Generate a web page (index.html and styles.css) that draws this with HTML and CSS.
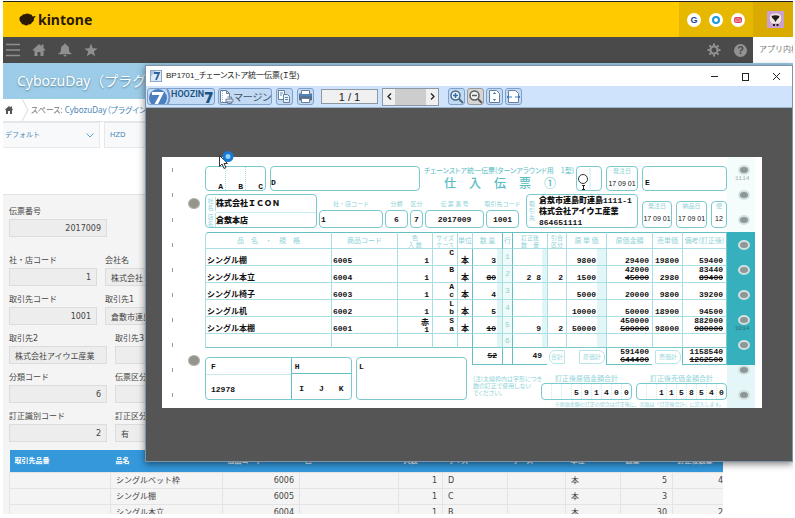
FILE: index.html
```html
<!DOCTYPE html>
<html lang="ja">
<head>
    <meta charset="UTF-8">
    <title>kintone - CybozuDay</title>
    <link rel="stylesheet" href="styles.css">
</head>
<body>
<div class="page">
    <header class="topbar">
        <a href="#" class="brand">
            <svg width="17" height="13" viewBox="0 0 17 12"><path fill="#2b1a05" d="M0.500 6Q0 3 2.500 2.500Q3.500 0.200 6 0.800Q8 -0.800 10.500 0.800Q13 0.500 13.500 3L16.800 2.500L14.800 5.200Q15.500 8 13 9Q12 11.500 9.500 11Q7 12.800 5 11Q2.500 11.500 2.200 9Q0.500 8 0.500 6Z"/></svg>
            <span>kintone</span>
        </a>
        <div class="services">
            <a href="#" class="service garoon">G</a>
            <a href="#" class="service" aria-label="Office"><svg width="14" height="14"><circle cx="7" cy="7" r="3" fill="none" stroke="#1c9ad6" stroke-width="2"/></svg></a>
            <a href="#" class="service" aria-label="Mail"><svg width="14" height="14"><rect x="3.500" y="4.500" width="7" height="5" rx="1" fill="#f08a98" stroke="#d9455c"/><path d="M4 5l3 2.500 3-2.500" fill="none" stroke="#d9455c"/></svg></a>
        </div>
        <div class="account">
            <svg width="17" height="17" viewBox="0 0 17 17"><rect width="17" height="17" fill="#c9a0cf"/><path fill="#efe6dc" d="M3 5Q4 2 8.500 2.500Q13 2 14 5Q15 10 12 12.500H5Q2 10 3 5Z"/><path fill="#221a1a" d="M4.500 5Q8.500 3.500 12.500 5Q12 8 10 8.500L8.500 11L7 8.500Q5 8 4.500 5ZM6 13h2v2H6zM9.500 13h2v2h-2z"/></svg>
        </div>
    </header>

    <nav class="navbar">
        <div class="nav-icons">
            <a href="#" aria-label="メニュー"><svg width="14" height="14"><path d="M0 1.500h14M0 7h14M0 12.500h14" stroke="#8f8f8f" stroke-width="1.500"/></svg></a>
            <a href="#" aria-label="ホーム"><svg width="14" height="14"><path fill="#8f8f8f" d="M7 1 0.500 7l1 1L2.500 7v6h3V9h3v4h3V7l1 1 1-1L11.500 5V1.500H9.500v1.700z"/></svg></a>
            <a href="#" aria-label="通知"><svg width="14" height="14"><path fill="#8f8f8f" d="M7 0.500q1 0 1 1.200 3 1 3 4.300 0 3.500 2.500 4.500v0.800h-13v-0.800Q3 9.500 3 6q0-3.300 3-4.300Q6 0.500 7 0.500zM5.500 12h3q-0.500 1.500-1.500 1.500T5.500 12z"/></svg></a>
            <a href="#" aria-label="お気に入り"><svg width="14" height="14"><path fill="#8f8f8f" d="M7 0.500 8.700 5.200 13.700 5.400 9.800 8.500 11.200 13.300 7 10.500 2.800 13.300 4.200 8.500 0.300 5.400 5.300 5.200z"/></svg></a>
        </div>
        <div class="nav-tools">
            <a href="#" aria-label="設定"><svg width="14" height="14"><circle cx="7" cy="7" r="3.600" fill="none" stroke="#929292" stroke-width="2.200"/><path d="M7 0.500v2M7 11.500v2M0.500 7h2M11.500 7h2M2.400 2.400l1.500 1.500M10.100 10.100l1.500 1.500M2.400 11.600l1.500-1.500M10.100 3.900l1.500-1.500" stroke="#929292" stroke-width="2"/></svg></a>
            <a href="#" aria-label="ヘルプ" class="help">?</a>
        </div>
        <input class="search" type="text" aria-label="アプリ内検索" placeholder="アプリ内検索">
    </nav>

    <h1 class="banner">CybozuDay（プラグイン）</h1>

    <div class="breadcrumb">
        <a href="#" class="crumb-home" aria-label="ホーム"><svg width="8" height="8"><path fill="#555" d="M4 0 0 3.500l0.700 0.800L1 4v4h2V5h2v3h2V4l0.300 0.300L8 3.500 7 2.500V0.500H5.500v0.900z"/></svg></a>
        <svg width="7" height="22"><path d="M0 0 6 11 0 22" fill="none" stroke="#d8dcdf"/></svg>
        <span class="crumb">スペース: <a href="#">CybozuDay（プラグイン）</a></span>
    </div>

    <div class="views">
        <div class="view-box">
            <select class="view" aria-label="一覧"><option>デフォルト</option></select>
            <svg width="8" height="5"><path d="M0.500 0.500 4 4 7.500 0.500" fill="none" stroke="#5fa3d0"/></svg>
        </div>
        <a href="#" class="view-box view-link">HZD</a>
    </div>

    <main class="record">
        <div class="fields first">
            <label class="field w98">伝票番号<input class="num" value="2017009" readonly></label>
        </div>
        <div class="fields">
            <label class="field w88">社・店コード<input class="num" value="1" readonly></label>
            <label class="field w98">会社名<input value="株式会社ＩＣＯＮ" readonly></label>
        </div>
        <div class="fields">
            <label class="field w88">取引先コード<input class="num" value="1001" readonly></label>
            <label class="field w98">取引先1<input value="倉敷市連島町連島1111-1" readonly></label>
        </div>
        <div class="fields">
            <label class="field w98">取引先2<input value="株式会社アイウエ産業" readonly></label>
            <label class="field w98">取引先3<input value="" readonly></label>
        </div>
        <div class="fields">
            <label class="field w98">分類コード<input class="num" value="6" readonly></label>
            <label class="field w98">伝票区分<input value="" readonly></label>
        </div>
        <div class="fields">
            <label class="field w98">訂正識別コード<input class="num" value="2" readonly></label>
            <label class="field w98">訂正区分<input value="有" readonly></label>
        </div>

        <table class="items">
            <colgroup><col class="i1"><col class="i2"><col class="i3"><col class="i4"><col class="i5"><col class="i6"><col class="i7"><col class="i8"><col class="i9"><col class="i10"></colgroup>
            <thead>
                <tr><th>取引先品番</th><th>品名</th><th>商品コード</th><th>色</th><th>入数</th><th>サイズ</th><th>ケース</th><th>単位</th><th>数量</th><th>訂正後数量</th></tr>
            </thead>
            <tbody>
                <tr><td></td><td>シングルベット枠</td><td class="num">6006</td><td></td><td class="num">1</td><td>D</td><td></td><td>本</td><td class="num">5</td><td class="num last">4</td></tr>
                <tr><td></td><td>シングル棚</td><td class="num">6005</td><td></td><td class="num">1</td><td>C</td><td></td><td>本</td><td class="num">3</td><td class="num last"></td></tr>
                <tr><td></td><td>シングル本立</td><td class="num">6004</td><td></td><td class="num">1</td><td>B</td><td></td><td>本</td><td class="num">30</td><td class="num last">2</td></tr>
            </tbody>
        </table>
    </main>

    <section class="window">
        <div class="titlebar">
            <svg width="12" height="12"><rect x="0.500" y="0.500" width="11" height="11" fill="#dfeaf5" stroke="#8aa9c9"/><path d="M1 11V6L6 1H1z" fill="#a9c4df"/><path d="M4 3h5L6 10" fill="none" stroke="#2c5f9e" stroke-width="1.800"/></svg>
            <span class="title">BP1701_チェーンストア統一伝票(Ｉ型)</span>
            <button type="button" aria-label="最小化"><svg width="9" height="9"><path d="M1 4.500h7" stroke="#222"/></svg></button>
            <button type="button" aria-label="最大化"><svg width="9" height="9"><rect x="1.500" y="1.500" width="6" height="7" fill="none" stroke="#222"/></svg></button>
            <button type="button" aria-label="閉じる"><svg width="9" height="9"><path d="M1 1l7 7M8 1 1 8" stroke="#222"/></svg></button>
        </div>
        <div class="toolbar">
            <button type="button" class="tool logo">
                <svg width="22" height="16" viewBox="0 0 22 16"><circle cx="9" cy="9" r="9" fill="#4b7fc0"/><path d="M3 3h12L9 15H5.500L10.500 6H3z" fill="#fff"/><path d="M18 0q5 8 0 16" fill="none" stroke="#6f97cb" stroke-width="2"/></svg>
                <span>HOOZIN</span><b>7</b>
            </button>
            <button type="button" class="tool margin">
                <svg width="15" height="14"><path d="M1.500 0.500h6l3 3v9h-9zM7.500 0.500v3h3" fill="#fff" stroke="#68809c"/><path d="M3.500 1v11" stroke="#9fbde0" stroke-dasharray="1 1"/><path d="M7 9h7v3H7zM8.500 7h4v2M8.500 12v1.500h4V12" fill="#dbe6f2" stroke="#68809c"/></svg>
                <span>マージン</span>
            </button>
            <button type="button" class="tool" aria-label="コピー"><svg width="15" height="15"><path d="M1.500 1.500h6v9h-6z" fill="#fff" stroke="#68809c"/><path d="M6.500 5.500h4l2 2v6h-6z" fill="#e9f1fa" stroke="#68809c"/><path d="M3 4h3M3 6h2M8 8.500h3M8 10.500h3" stroke="#5886ba"/></svg></button>
            <button type="button" class="tool" aria-label="印刷"><svg width="15" height="15"><rect x="1" y="4.500" width="13" height="7" rx="1" fill="#5b6b80"/><path d="M3.500 1.500h8v4h-8z" fill="#fff" stroke="#68809c"/><path d="M1.500 6.500h12" stroke="#4b83c3" stroke-width="2"/><path d="M3.500 9.500h8v4h-8z" fill="#fff" stroke="#68809c"/></svg></button>
            <input class="counter" aria-label="ページ" value="1 / 1" readonly>
            <div class="pager">
                <button type="button" aria-label="前"><svg width="5" height="7"><path d="M4 0.500 1 3.500l3 3" fill="none" stroke="#222" stroke-width="1.300"/></svg></button>
                <span class="thumb"></span>
                <button type="button" aria-label="次"><svg width="5" height="7"><path d="M1 0.500 4 3.500l-3 3" fill="none" stroke="#222" stroke-width="1.300"/></svg></button>
            </div>
            <button type="button" class="tool" aria-label="拡大"><svg width="15" height="15"><circle cx="6.500" cy="6.500" r="4.500" fill="#eaf3fd" stroke="#4f6680" stroke-width="1.500"/><path d="M10 10l4 4" stroke="#4f6680" stroke-width="2"/><path d="M4 6.500h5M6.500 4v5" stroke="#2f6cb3" stroke-width="1.500"/></svg></button>
            <button type="button" class="tool gray" aria-label="縮小"><svg width="15" height="15"><circle cx="6.500" cy="6.500" r="4.500" fill="#f2f2f2" stroke="#5c5c5c" stroke-width="1.500"/><path d="M10 10l4 4" stroke="#5c5c5c" stroke-width="2"/><path d="M4 6.500h5" stroke="#5c5c5c" stroke-width="1.500"/></svg></button>
            <button type="button" class="tool" aria-label="全体表示"><svg width="15" height="15"><path d="M2.500 1.500h7l3 3v9h-10z" fill="#fff" stroke="#68809c"/><path d="M6.500 4.500 7.500 3.500 8.500 4.500zM6.500 10.500 7.500 11.500 8.500 10.500z" fill="#3b78bd" stroke="#3b78bd"/></svg></button>
            <button type="button" class="tool" aria-label="幅に合わせる"><svg width="15" height="15"><path d="M2.500 1.500h7l3 3v9h-10z" fill="#fff" stroke="#68809c"/><path d="M1 8h5M9 8h5M3 6.500 1 8l2 1.500M12 6.500 14 8l-2 1.500" fill="none" stroke="#3b78bd"/></svg></button>
        </div>

        <div class="viewer">
            <div class="paper">
                <div class="feed-left">
                    <ul class="ticks"><li></li><li></li><li></li><li></li><li></li><li></li><li></li><li></li><li></li><li></li></ul>
                    <div class="punches"><i></i><i></i></div>
                </div>

                <div class="slip">
                    <div class="slip-head">
                        <div class="box thirds"><span>A</span><span>B</span><span>C</span></div>
                        <div class="box mid">D</div>
                        <div class="slip-title">
                            <small>チェーンストア統一伝票(ターンアラウンド用　1型)</small>
                            <h2><span>仕</span><span>入</span><span>伝</span><span>票</span><span>①</span></h2>
                        </div>
                        <div class="box marks"><svg width="24" height="23"><path d="M13 1v21" stroke="#c5ebed"/><circle cx="6" cy="12" r="4.500" fill="none" stroke="#333"/><path d="M5 18.500h3M5 22.500h3M6.500 18v4" stroke="#222"/></svg></div>
                        <div class="box date"><small>発注日</small><span>17 09 01</span></div>
                        <div class="box mid pad">E</div>
                    </div>

                    <div class="slip-company">
                        <div class="box names">
                            <small>社<br>名</small><small>店<br>名</small>
                            <b>株式会社ＩＣＯＮ</b><b>倉敷本店</b>
                        </div>
                        <div class="labelled"><small>社・店コード</small><div class="box">1</div></div>
                        <div class="labelled center"><small>分類</small><div class="box">6</div></div>
                        <div class="labelled center"><small>区分</small><div class="box">7</div></div>
                        <div class="labelled center"><small>伝 票 番 号</small><div class="box">2017009</div></div>
                        <div class="labelled center"><small>取引先コード</small><div class="box">1001</div></div>
                        <div class="box address">
                            <small>取<br>引<br>先</small>
                            <b>倉敷市連島町連島1111-1<br>株式会社アイウエ産業<br>864651111</b>
                        </div>
                        <div class="box date low"><small>発注日</small><span>17 09 01</span></div>
                        <div class="box date low"><small>納品日</small><span>17 09 01</span></div>
                        <div class="box date low"><small>便</small><span>12</span></div>
                    </div>

                    <table class="lines">
                        <colgroup><col class="c-name"><col class="c-code"><col class="c-case"><col class="c-size"><col class="c-unit"><col class="c-qty"><col class="c-row"><col class="c-rev"><col class="c-div"><col class="c-cost"><col class="c-amount"><col class="c-price"><col class="c-total"></colgroup>
                        <thead>
                            <tr><th>品　名　・　規　格</th><th>商品コード</th><th class="two">色<br>入 数</th><th class="two">サイズ<br>ケース</th><th>単位</th><th>数 量</th><th>行</th><th class="two">訂正後<br>数　量</th><th class="two">引合<br>区分</th><th>原 単 価</th><th>原価金額</th><th>売単価</th><th>備考(訂正後)</th></tr>
                        </thead>
                        <tbody>
                            <tr><td>シングル棚</td><td>6005</td><td>1</td><td>C<br>&nbsp;</td><td>本</td><td>3</td><td>1</td><td></td><td></td><td>9800</td><td>29400</td><td>19800</td><td>59400</td></tr>
                            <tr><td>シングル本立</td><td>6004</td><td>1</td><td>B<br>&nbsp;</td><td>本</td><td><s>80</s></td><td>2</td><td>2 8</td><td>2</td><td>1500</td><td>42000<br><s>45000</s></td><td>2980</td><td>83440<br><s>89400</s></td></tr>
                            <tr><td>シングル椅子</td><td>6003</td><td>1</td><td>A<br>c</td><td>本</td><td>4</td><td>3</td><td></td><td></td><td>5000</td><td>20000</td><td>9800</td><td>39200</td></tr>
                            <tr><td>シングル机</td><td>6002</td><td>1</td><td>L<br>b</td><td>本</td><td>5</td><td>4</td><td></td><td></td><td>10000</td><td>50000</td><td>18900</td><td>94500</td></tr>
                            <tr><td>シングル本棚</td><td>6001</td><td class="stack">赤<br>1</td><td>S<br>a</td><td>本</td><td><s>10</s></td><td>5</td><td>9</td><td>2</td><td>50000</td><td>450000<br><s>500000</s></td><td>98000</td><td>882000<br><s>980000</s></td></tr>
                            <tr><td></td><td></td><td></td><td></td><td></td><td></td><td>6</td><td></td><td></td><td></td><td></td><td></td><td></td></tr>
                        </tbody>
                        <tfoot>
                            <tr><td colspan="5"></td><td><s>52</s></td><td></td><td>49</td><td class="tag"><span>合計</span></td><td class="tag"><span>原価計</span></td><td>591400<br><s>644400</s></td><td class="tag"><span>売価計</span></td><td>1158540<br><s>1262500</s></td></tr>
                        </tfoot>
                    </table>

                    <div class="slip-foot">
                        <div class="box codes">
                            <div class="code-left"><span>F</span><span>12978</span></div>
                            <div class="code-right"><span>H</span><div><span>I</span><span>J</span><span>K</span></div></div>
                        </div>
                        <div class="box remark">L</div>
                        <p class="note">(注)太線枠内は字形につき<br>数の訂正で使用しない<br>でください。</p>
                        <div class="sum">
                            <small>訂正後原価金額合計</small>
                            <div class="box digits"><span></span><span></span><span></span><span>5</span><span>9</span><span>1</span><span>4</span><span>0</span><span>0</span></div>
                        </div>
                        <div class="sum">
                            <small>訂正後売価金額合計</small>
                            <div class="box digits"><span></span><span></span><span>1</span><span>1</span><span>5</span><span>8</span><span>5</span><span>4</span><span>0</span></div>
                        </div>
                    </div>
                    <p class="fineprint">※原価金額の訂正の場合は訂正後に、売価は「訂正後合計」に記入します。</p>
                </div>

                <ul class="feed-right"><li><span>1114</span></li><li></li><li></li><li></li><li></li><li></li><li><span class="dark">1014</span></li><li></li><li></li><li></li></ul>
            </div>
        </div>
    </section>

    <svg class="cursor" width="20" height="20"><path d="M3.500 5.500v11l2.500-2.500 2 4.500 2-1-2-4h3.500z" fill="#fff" stroke="#333"/><circle cx="12" cy="6.500" r="4" fill="#8fd2f8" stroke="#1679d3" stroke-width="3"/></svg>
</div>
</body>
</html>
```
FILE: styles.css
```css
* {
    box-sizing: border-box;
}
body {
    margin: 0;
    background: #fff;
    color: #444;
    font-family: "DejaVu Sans", "Noto Sans CJK JP", sans-serif;
    font-size: 8px;
    line-height: 12px;
}
a {
    color: #4a86b8;
    text-decoration: none;
}
svg {
    display: block;
    flex: none;
}
ul {
    list-style: none;
    margin: 0;
    padding: 0;
}
button, input, select {
    font: inherit;
    color: inherit;
    margin: 0;
    padding: 0;
    border: 0;
    border-radius: 0;
    background: none;
}
.page {
    position: relative;
    height: calc(100vh - 5px);
    margin: 1px 2px 4px 3px;
    overflow: hidden;
    background: #fff;
}

/* header */
.topbar {
    display: flex;
    height: 36px;
    border-top: 1px solid #222;
    background: #ffcb00;
}
.brand {
    display: flex;
    align-items: center;
    gap: 2px;
    flex: 1;
    padding-left: 16px;
    color: #2b1a05;
    font: bold 14px/20px "Noto Sans", sans-serif;
}
.services {
    display: flex;
    align-items: center;
    justify-content: center;
    gap: 8px;
    width: 74px;
    background: #e6b800;
}
.service {
    width: 14px;
    height: 14px;
    border-radius: 50%;
    background: #fff;
}
.garoon {
    color: #233f9c;
    font: bold 9px/14px "Liberation Sans", sans-serif;
    text-align: center;
}
.account {
    display: flex;
    align-items: center;
    width: 40px;
    padding-left: 14px;
    background: #d9ab00;
}
.navbar {
    display: flex;
    height: 26px;
    background: #4a4a4a;
}
.nav-icons, .nav-tools {
    display: flex;
    align-items: center;
    gap: 12px;
    padding: 0 3px;
}
.nav-icons {
    flex: 1;
}
.nav-tools {
    gap: 13px;
    padding: 0 6px;
}
.help {
    width: 13px;
    height: 13px;
    border-radius: 50%;
    background: #929292;
    color: #4a4a4a;
    font: bold 11px/13px "Liberation Sans", sans-serif;
    text-align: center;
}
.search {
    width: 40px;
    padding-left: 6px;
    background: #fff;
    font-size: 8px;
}
.search::placeholder {
    color: #777;
}
.banner {
    height: 36px;
    margin: 0;
    padding-left: 14px;
    background: #9ccce8;
    color: #fff;
    font: 14px/35px "Noto Sans", "Noto Sans CJK JP", sans-serif;
    text-shadow: 0 1px 2px #55809b;
}
.breadcrumb {
    display: flex;
    align-items: center;
    height: 23px;
    border-bottom: 1px solid #e3e6e8;
    color: #777;
    font-family: "Noto Sans", "Noto Sans CJK JP", sans-serif;
    font-feature-settings: "palt";
}
.crumb-home {
    padding: 0 9px 0 2px;
}
.crumb {
    padding-left: 2px;
    white-space: nowrap;
}
.views {
    display: flex;
    gap: 4px;
    height: 72px;
}
.view-box {
    display: flex;
    align-items: center;
    width: 97px;
    height: 26px;
    padding: 0 5px 0 2px;
    border: 1px solid #e5e9ec;
    border-left: 0;
    background: #f7f9fa;
    color: #4a86b8;
    font-size: 7px;
}
.view-link {
    padding-left: 5px;
    border-left: 1px solid #e5e9ec;
}
.view {
    flex: 1;
    appearance: none;
}

/* record form */
.record {
    height: 322px;
    margin-right: 70px;
    padding: 10px 0 0 6px;
    border-top: 1px solid #e3e3e3;
    background: #f4f4f4;
    overflow: hidden;
}
.fields {
    display: flex;
    gap: 8px;
    height: 39px;
}
.fields.first {
    height: 49px;
}
.field {
    line-height: 14px;
    white-space: nowrap;
}
.field input {
    display: block;
    width: 100%;
    height: 18px;
    padding: 0 5px;
    border: 1px solid #dcdcdc;
    background: #ededed;
}
.w98 {
    width: 98px;
}
.w88 {
    width: 88px;
}
.num {
    text-align: right;
}
.items {
    width: 100%;
    margin-top: 1px;
    border-collapse: collapse;
    table-layout: fixed;
}
.items th {
    height: 22px;
    padding: 0 5px;
    background: #3498db;
    color: #fff;
    font-size: 7px;
    text-align: left;
    white-space: nowrap;
}
.items td {
    height: 16px;
    padding: 0 5px;
    border: 1px solid #e4e4e4;
    line-height: 15px;
    white-space: nowrap;
}
.items td.num {
    text-align: right;
}
.items td.last {
    padding-right: 0;
}
.i1 { width: 101px; }
.i2 { width: 112px; }
.i3 { width: 77px; }
.i4 { width: 99px; }
.i5 { width: 44px; }
.i6 { width: 65px; }
.i7 { width: 58px; }
.i8 { width: 55px; }
.i9 { width: 52px; }
.i10 { width: 51px; }

/* print preview window */
.window {
    position: absolute;
    top: 64px;
    left: 142px;
    right: 0;
    height: 397px;
    display: flex;
    flex-direction: column;
    border: 1px solid #7d93a8;
    background: #fff;
    box-shadow: 0 2px 7px rgba(0, 0, 0, 0.5);
}
.titlebar {
    display: flex;
    align-items: center;
    height: 20px;
    padding: 0 11px 0 4px;
    color: #222;
}
.title {
    flex: 1;
    padding-left: 4px;
    font-family: "Liberation Sans", "Noto Sans CJK JP", sans-serif;
    font-feature-settings: "palt";
}
.titlebar button {
    margin-left: 22px;
}
.toolbar {
    display: flex;
    align-items: center;
    gap: 2px;
    height: 22px;
    padding: 0 1px;
    border-bottom: 1px solid #9ab4cf;
    background: #cfe3fc;
}
.tool {
    display: flex;
    align-items: center;
    justify-content: center;
    width: 17px;
    height: 17px;
    border: 1px solid #7fa0c8;
    border-radius: 3px;
    background: #c3daf5;
}
.tool.gray {
    border-color: #999;
    background: #d5d5d5;
}
.logo {
    width: 68px;
    overflow: hidden;
    color: #1d5382;
    font: bold 10px/12px "Open Sans", sans-serif;
}
.logo span {
    align-self: flex-start;
    font: 600 9px/11px "Roboto", sans-serif;
}
.logo b {
    font-size: 15px;
}
.margin {
    width: 54px;
    margin: 0 2px 0 1px;
    color: #456;
    font-family: "Noto Sans CJK JP", sans-serif;
    font-size: 10px;
    font-feature-settings: "palt";
    white-space: nowrap;
}
.margin + .tool {
    margin-right: 2px;
}
.counter {
    width: 57px;
    height: 15px;
    margin: 0 2px 0 5px;
    border: 1px solid #8e98a3;
    background: #f0f0f0;
    color: #222;
    font-family: "Liberation Sans", sans-serif;
    font-size: 11px;
    text-align: center;
}
.pager {
    display: flex;
    align-items: center;
    width: 57px;
    height: 18px;
    margin-right: 7px;
    border: 1px solid #8e98a3;
    background: #f0f0f0;
}
.pager button {
    display: flex;
    justify-content: center;
    width: 12px;
}
.thumb {
    flex: 1;
    height: 16px;
    background: #cdcdcd;
}
.viewer {
    flex: 1;
    padding: 49px 30px 0 16px;
    background: #555;
}

/* slip */
.paper {
    display: flex;
    height: 251px;
    background: #fff;
    color: #111;
    font: bold 8px/8px "Liberation Mono", "Noto Sans CJK JP", monospace;
}
.paper small {
    display: block;
    color: #8fd3d7;
    font-family: "Noto Sans CJK JP", sans-serif;
    font-size: 6px;
    line-height: 7px;
    font-weight: normal;
    white-space: nowrap;
}
.feed-left {
    display: flex;
    width: 43px;
    padding-left: 10px;
}
.ticks {
    flex: 1;
    padding-top: 11px;
}
.ticks li {
    width: 1px;
    height: 4px;
    margin-bottom: 21px;
    background: #999;
}
.ticks li:last-child {
    margin-bottom: 0;
}
.punches {
    width: 17px;
    padding-top: 41px;
}
.punches i {
    display: block;
    width: 12px;
    height: 11px;
    margin-bottom: 146px;
    border: 1px solid #b5b5ac;
    border-radius: 50%;
    background: #94958c;
}
.punches i:last-child {
    margin-bottom: 0;
}
.slip {
    flex: 1;
    min-width: 0;
    padding-top: 9px;
}
.box {
    min-width: 0;
    border: 1px solid #79c9cf;
    border-radius: 4px;
    white-space: nowrap;
}
.slip-head {
    display: grid;
    grid-template: 25px / 61fr 150fr 148fr 26fr 32fr 85fr;
    gap: 4px;
}
.slip-head > *, .slip-company > *, .slip-foot > * {
    min-width: 0;
}
.thirds {
    display: flex;
}
.thirds span {
    flex: 1;
    padding: 16px 2px 0 0;
    text-align: right;
}
.thirds span + span {
    border-left: 1px dotted #a9dfe2;
}
.mid {
    padding-top: 12px;
}
.pad {
    padding-left: 2px;
}
.slip-title {
    color: #58bcc3;
}
.slip-title small {
    color: #58bcc3;
    font-size: 7px;
    line-height: 8px;
    font-feature-settings: "palt";
}
.slip-title h2 {
    display: flex;
    justify-content: space-between;
    margin: 0;
    padding: 2px 16px 0 20px;
    font: 500 12px/14px "Noto Sans CJK JP", sans-serif;
}
.date {
    text-align: center;
    font-family: "Liberation Sans", sans-serif;
    font-size: 7px;
    font-weight: normal;
}
.date small {
    padding-bottom: 6px;
}
.slip-company {
    display: grid;
    grid-template: 34px / 112fr 64fr 23fr 13fr 59fr 33fr 117fr 32fr 33fr 18fr;
    gap: 2px;
    margin: 3px 0 4px;
}
.names {
    display: grid;
    grid-template: 17px 15px / 10px 1fr;
    grid-auto-flow: column;
    align-items: center;
}
.names small {
    text-align: center;
    border-right: 1px solid #b9e5e7;
}
.names b:last-child {
    align-self: stretch;
    padding-top: 4px;
    border-top: 1px solid #c9edee;
}
.labelled {
    display: flex;
    flex-direction: column;
    justify-content: flex-end;
}
.labelled small {
    align-self: center;
    padding-bottom: 3px;
}
.labelled .box {
    height: 18px;
    padding-left: 1px;
    line-height: 17px;
}
.labelled.center .box {
    padding: 0;
    text-align: center;
}
.address {
    display: flex;
    gap: 4px;
    margin-left: 5px;
    padding-left: 2px;
}
.address small {
    padding-top: 5px;
}
.address b {
    line-height: 11px;
}
.low {
    height: 27px;
    margin-left: 2px;
    align-self: end;
}

/* slip lines */
.lines {
    width: 100%;
    height: 133px;
    table-layout: fixed;
    border-collapse: separate;
    border-spacing: 0;
}
.lines th, .lines td {
    padding: 0 3px 0 1px;
    border-bottom: 1px solid #a9dfe2;
    border-left: 1px solid #a9dfe2;
    line-height: 8px;
    text-align: right;
    vertical-align: bottom;
    white-space: nowrap;
}
.lines th {
    height: 17px;
    padding: 0;
    border-top: 1px solid #65c0c6;
    color: #8fd3d7;
    font-family: "Noto Sans CJK JP", sans-serif;
    font-size: 7px;
    line-height: 7px;
    font-weight: normal;
    text-align: center;
    vertical-align: middle;
}
.lines .two {
    font-size: 6px;
}
.lines th:first-child {
    border-top-left-radius: 4px;
}
.lines th:last-child, .lines td:last-child {
    border-right: 1px solid #79c9cf;
}
.lines tbody tr {
    height: 17px;
}
.lines tbody tr:last-child {
    height: 14px;
}
.lines tbody td:nth-child(1), .lines tbody td:nth-child(2) {
    text-align: left;
}
.lines .stack {
    line-height: 7px;
}
.lines tbody td:nth-child(5), .lines tbody td:nth-child(7) {
    padding: 0;
    text-align: center;
}
.lines tbody td:nth-child(7) {
    background: #effafa;
    color: #8fd3d7;
    font-weight: normal;
    vertical-align: middle;
}
.lines td:nth-child(6), .lines th:nth-child(7), .lines th:nth-child(8) {
    border-left-color: #65c0c6;
}
.lines tbody td:nth-child(6), .lines tbody td:nth-child(8) {
    padding-right: 6px;
    background: linear-gradient(to left, #dff5f6 5px, transparent 5px);
}
.lines tbody td:nth-child(8) {
    border-left: 1px solid #65c0c6;
}
.lines tbody td:nth-child(10) {
    padding-right: 10px;
    background: linear-gradient(to left, #e3f6f7 9px, transparent 9px);
}
.lines tbody tr:last-child td {
    border-bottom-color: #79c9cf;
}
.lines tfoot td {
    border-color: #65c0c6;
}
.lines tfoot td:first-child, .lines tfoot .tag {
    border-bottom: 0;
    border-left: 0;
}
.lines tfoot td:nth-child(2), .lines tfoot td:nth-child(4) {
    padding-right: 5px;
    vertical-align: middle;
}
.lines tfoot .tag {
    padding: 0 1px 0 0;
    font-family: "Noto Sans CJK JP", sans-serif;
    font-size: 6px;
    vertical-align: middle;
}
.tag span {
    display: inline-block;
    padding: 2px 3px;
    border: 1px solid #b9e5e7;
    border-radius: 1px 6px 6px 1px;
    color: #9bd8dc;
    font-weight: normal;
}
.tag:nth-child(5) span {
    padding: 2px 1px;
    border-radius: 6px 1px 1px 6px;
}
.c-name { width: 126px; }
.c-code { width: 66px; }
.c-case { width: 35px; }
.c-size { width: 25px; }
.c-unit { width: 15px; }
.c-qty { width: 30px; }
.c-row { width: 10px; }
.c-rev { width: 35px; }
.c-div { width: 19px; }
.c-cost { width: 40px; }
.c-amount { width: 46px; }
.c-price { width: 30px; }
.c-total { width: 45px; }

.slip-foot {
    display: grid;
    grid-template: 43px / 147fr 111fr 66fr 91fr 91fr;
    gap: 4px;
    margin-top: -8px;
}
.codes {
    display: grid;
    grid-template-columns: 86fr 61fr;
}
.code-left, .code-right {
    display: grid;
    grid-template-rows: 16px 1fr;
}
.code-left > span {
    padding: 5px;
}
.code-left > span + span {
    padding-top: 11px;
    border-top: 1px solid #c9edee;
}
.code-right > span {
    padding: 5px 3px;
    border-bottom: 1px solid #65c0c6;
}
.code-right {
    border-left: 1px solid #65c0c6;
}
.code-right div {
    display: flex;
    padding-top: 11px;
}
.code-right div span {
    flex: 1;
    text-align: center;
}
.remark {
    padding: 5px 2px;
}
.note {
    margin: 0;
    padding: 18px 0 0 2px;
    color: #8fd3d7;
    font-family: "Noto Sans CJK JP", sans-serif;
    font-size: 6px;
    line-height: 7px;
    font-weight: normal;
    font-feature-settings: "palt";
    white-space: nowrap;
}
.sum {
    display: flex;
    flex-direction: column;
    justify-content: flex-end;
}
.sum small {
    align-self: center;
    font-size: 7px;
    line-height: 9px;
}
.digits {
    display: flex;
    height: 17px;
    line-height: 17px;
}
.digits span {
    flex: 1;
    text-align: center;
}
.digits span + span {
    border-left: 1px dotted #c9edee;
}
.fineprint {
    margin: 0;
    padding-right: 3px;
    color: #8fd3d7;
    font-family: "Noto Sans CJK JP", sans-serif;
    font-size: 5px;
    line-height: 7px;
    font-weight: normal;
    text-align: right;
    white-space: nowrap;
}
.feed-right {
    width: 28px;
    margin-right: 7px;
    padding: 1px 0 0;
    background: linear-gradient(#f4fcfc 75px, #35b0bc 75px, #35b0bc 208px, #e4f6f7 208px);
}
.feed-right li {
    width: 12px;
    height: 10px;
    margin: 7px 0 15px 11px;
    border: 2px solid #d3e0e0;
    border-radius: 50%;
    background: #8d9797;
}
.feed-right li:last-child {
    margin-bottom: 0;
}
.feed-right span {
    display: block;
    margin-left: -5px;
    padding-top: 8px;
    color: #9fb0b0;
    font-size: 6px;
    font-weight: normal;
}
.feed-right .dark {
    color: #2b6f77;
}

.cursor {
    position: absolute;
    top: 149px;
    left: 213px;
}
```
